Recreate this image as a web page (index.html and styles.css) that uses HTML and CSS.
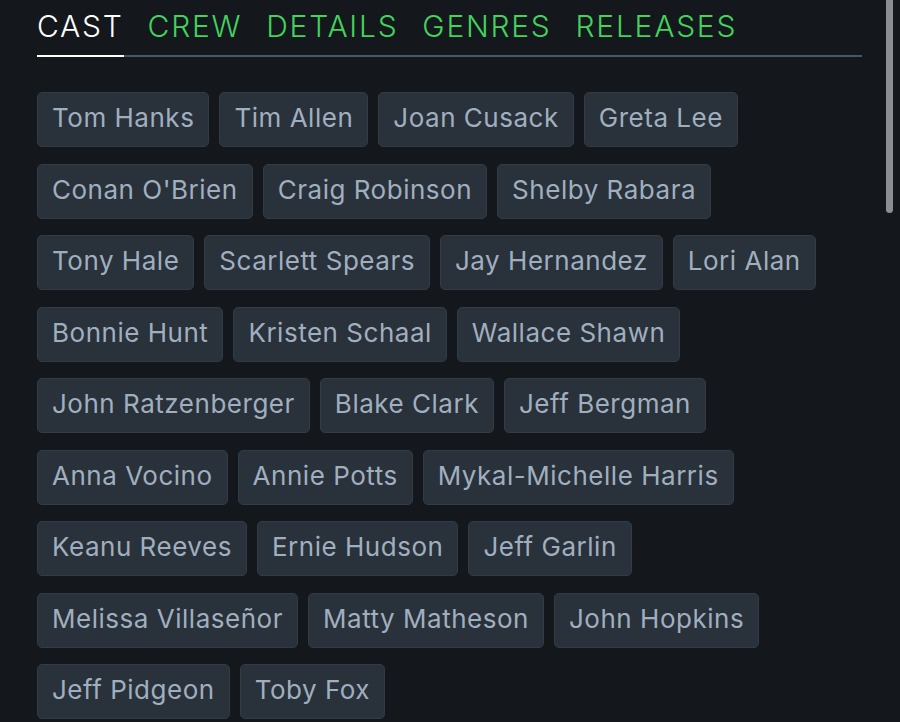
FILE: index.html
```html
<!DOCTYPE html>
<html>
<head>
<meta charset="utf-8">
<link rel="stylesheet" href="styles.css">
</head>
<body>
<div class="page">
  <nav class="tabs">
    <a class="tab active">CAST</a>
    <a class="tab">CREW</a>
    <a class="tab">DETAILS</a>
    <a class="tab">GENRES</a>
    <a class="tab">RELEASES</a>
  </nav>
  <div class="chips">
    <a class="chip">Tom Hanks</a>
    <a class="chip">Tim Allen</a>
    <a class="chip">Joan Cusack</a>
    <a class="chip">Greta Lee</a>
    <a class="chip">Conan O'Brien</a>
    <a class="chip">Craig Robinson</a>
    <a class="chip">Shelby Rabara</a>
    <a class="chip">Tony Hale</a>
    <a class="chip">Scarlett Spears</a>
    <a class="chip">Jay Hernandez</a>
    <a class="chip">Lori Alan</a>
    <a class="chip">Bonnie Hunt</a>
    <a class="chip">Kristen Schaal</a>
    <a class="chip">Wallace Shawn</a>
    <a class="chip">John Ratzenberger</a>
    <a class="chip">Blake Clark</a>
    <a class="chip">Jeff Bergman</a>
    <a class="chip">Anna Vocino</a>
    <a class="chip">Annie Potts</a>
    <a class="chip">Mykal-Michelle Harris</a>
    <a class="chip">Keanu Reeves</a>
    <a class="chip">Ernie Hudson</a>
    <a class="chip">Jeff Garlin</a>
    <a class="chip">Melissa Villaseñor</a>
    <a class="chip">Matty Matheson</a>
    <a class="chip">John Hopkins</a>
    <a class="chip">Jeff Pidgeon</a>
    <a class="chip">Toby Fox</a>
  </div>
</div>
<div class="scrollbar"></div>
</body>
</html>
```

FILE: styles.css
```css
html, body {
  margin: 0;
  padding: 0;
  background: #14181c;
  height: 100%;
  overflow: hidden;
}
body {
  font-family: Inter, "Noto Sans", sans-serif;
}
.page {
  padding: 8px 38px 0 37px;
}
.tabs {
  display: flex;
  gap: 24px;
  border-bottom: 2px solid #445566;
}
.tab {
  font-size: 30px;
  font-weight: 300;
  line-height: 36px;
  letter-spacing: 0.058em;
  color: #42d35c;
  padding-bottom: 11px;
  margin-bottom: -2px;
  border-bottom: 2px solid transparent;
}
.tab.active {
  color: #ffffff;
  border-bottom-color: #ffffff;
}
.chips {
  display: flex;
  flex-wrap: wrap;
  gap: 16.5px 10px;
  margin-top: 35px;
}
.chip {
  font-size: 26px;
  line-height: 32px;
  letter-spacing: 0.02em;
  color: #a0afbf;
  background: #29313a;
  border: 1px solid #323b46;
  border-radius: 5px;
  padding: 9px 14px 12px;
}
.scrollbar {
  position: absolute;
  top: 0;
  left: 886px;
  width: 7px;
  height: 213px;
  background: #8b8e92;
  border-radius: 0 0 4px 4px;
}
```
